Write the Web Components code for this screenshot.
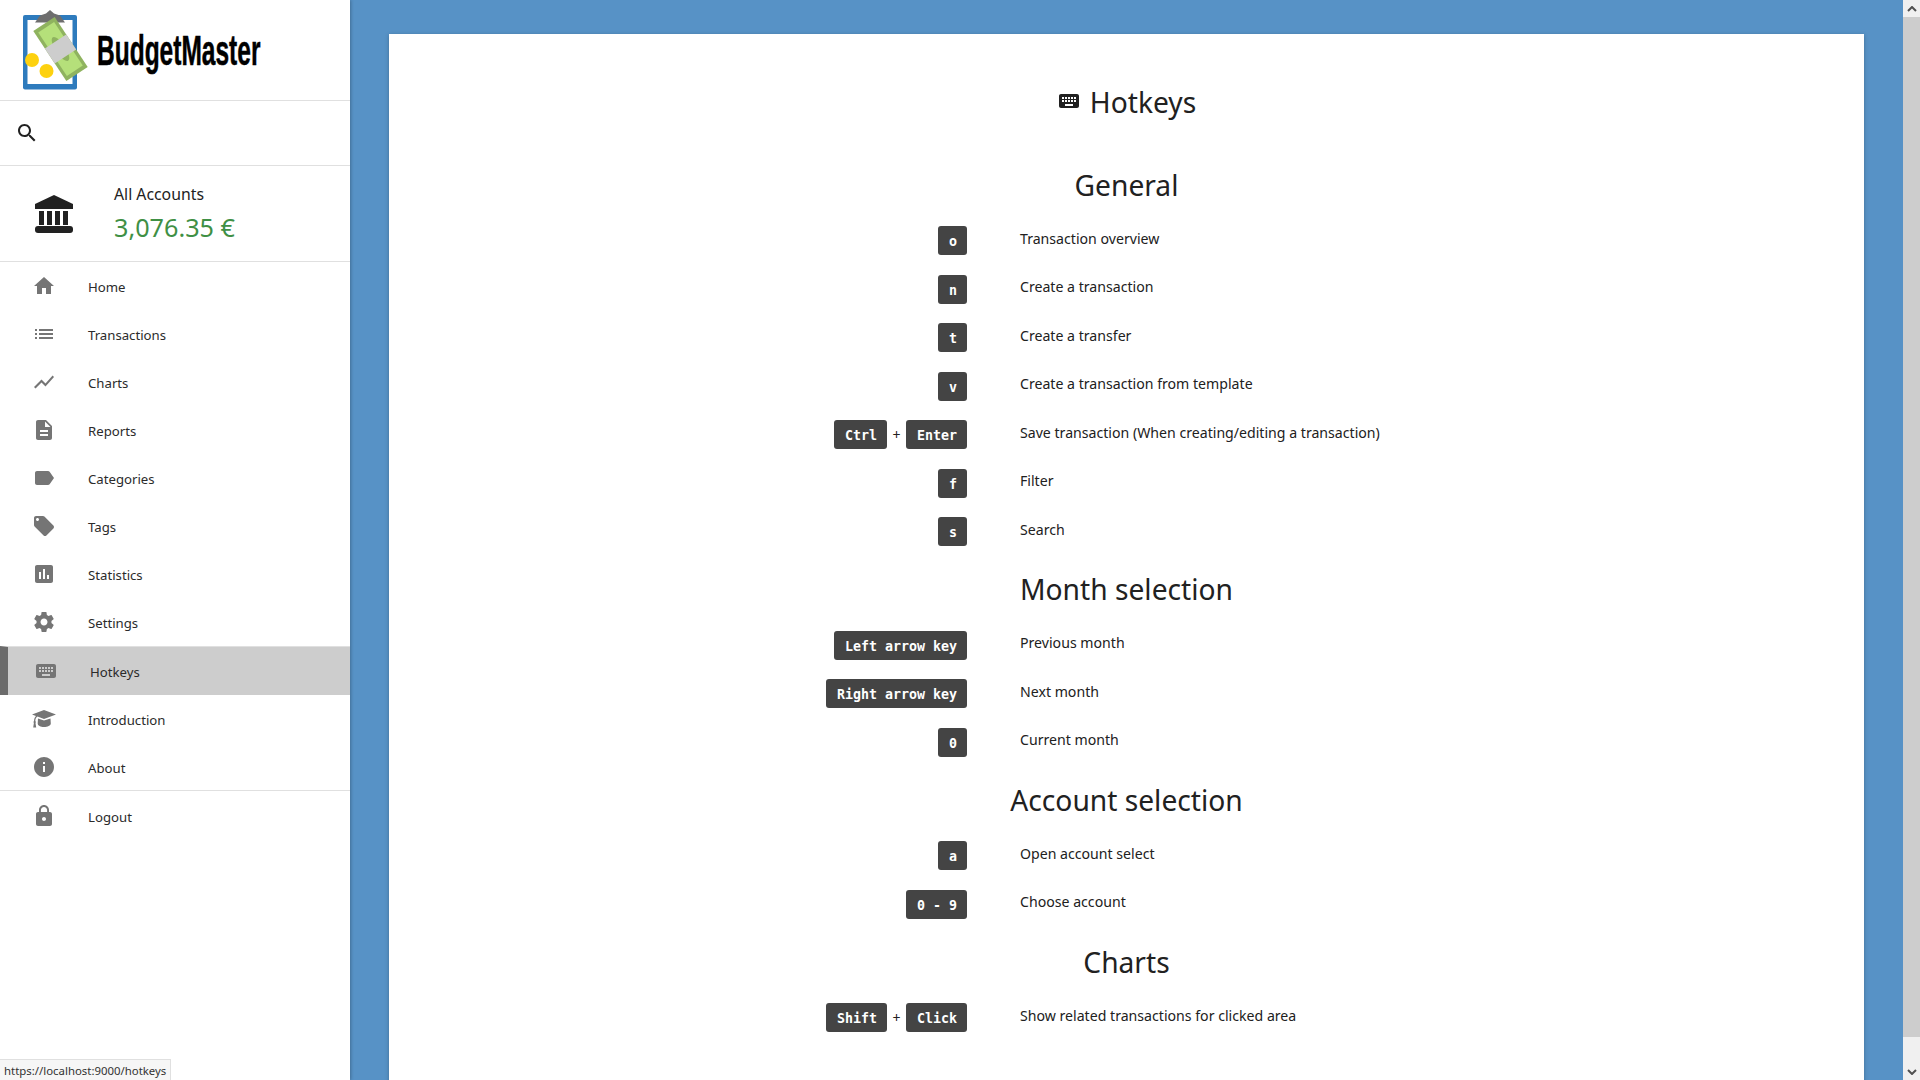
<!DOCTYPE html>
<html lang="en">
<head>
<meta charset="utf-8">
<title>BudgetMaster - Hotkeys</title>
<style>
  html, body { margin: 0; height: 100%; overflow: hidden; }
  body { font-family: "Noto Sans", "Open Sans", sans-serif; color: #212121; }
</style>
</head>
<body>
<bm-app>
  <bm-sidebar slot="sidebar">
    <bm-nav-item icon="home">Home</bm-nav-item>
    <bm-nav-item icon="list">Transactions</bm-nav-item>
    <bm-nav-item icon="chart">Charts</bm-nav-item>
    <bm-nav-item icon="report">Reports</bm-nav-item>
    <bm-nav-item icon="label">Categories</bm-nav-item>
    <bm-nav-item icon="tag">Tags</bm-nav-item>
    <bm-nav-item icon="stats">Statistics</bm-nav-item>
    <bm-nav-item icon="settings">Settings</bm-nav-item>
    <bm-nav-item icon="keyboard" active>Hotkeys</bm-nav-item>
    <bm-nav-item icon="school">Introduction</bm-nav-item>
    <bm-nav-item icon="info">About</bm-nav-item>
    <bm-nav-item icon="lock" divided>Logout</bm-nav-item>
  </bm-sidebar>

  <bm-card>
    <bm-title>Hotkeys</bm-title>

    <bm-section heading="General" first>
      <bm-row keys="o">Transaction overview</bm-row>
      <bm-row keys="n">Create a transaction</bm-row>
      <bm-row keys="t">Create a transfer</bm-row>
      <bm-row keys="v">Create a transaction from template</bm-row>
      <bm-row keys="Ctrl,Enter">Save transaction (When creating/editing a transaction)</bm-row>
      <bm-row keys="f">Filter</bm-row>
      <bm-row keys="s">Search</bm-row>
    </bm-section>

    <bm-section heading="Month selection">
      <bm-row keys="Left arrow key">Previous month</bm-row>
      <bm-row keys="Right arrow key">Next month</bm-row>
      <bm-row keys="0">Current month</bm-row>
    </bm-section>

    <bm-section heading="Account selection">
      <bm-row keys="a">Open account select</bm-row>
      <bm-row keys="0 - 9">Choose account</bm-row>
    </bm-section>

    <bm-section heading="Charts">
      <bm-row keys="Shift,Click">Show related transactions for clicked area</bm-row>
    </bm-section>
  </bm-card>
</bm-app>
<bm-status>https://localhost:9000/hotkeys</bm-status>

<script>
const ICONS = {
  home: 'M10 20v-6h4v6h5v-8h3L12 3 2 12h3v8z',
  list: 'M3 13h2v-2H3v2zm0 4h2v-2H3v2zm0-8h2V7H3v2zm4 4h14v-2H7v2zm0 4h14v-2H7v2zM7 7v2h14V7H7z',
  chart: 'M3.5 18.49l6-6.01 4 4L22 6.92l-1.41-1.41-7.09 7.97-4-4L2 16.99z',
  report: 'M14 2H6c-1.1 0-1.99.9-1.99 2L4 20c0 1.1.89 2 1.99 2H18c1.1 0 2-.9 2-2V8l-6-6zm2 16H8v-2h8v2zm0-4H8v-2h8v2zm-3-5V3.5L18.5 9H13z',
  label: 'M17.63 5.84C17.27 5.33 16.67 5 16 5L5 5.01C3.9 5.01 3 5.9 3 7v10c0 1.1.9 1.99 2 1.99L16 19c.67 0 1.27-.33 1.63-.84L22 12l-4.37-6.16z',
  tag: 'M21.41 11.58l-9-9C12.05 2.22 11.55 2 11 2H4c-1.1 0-2 .9-2 2v7c0 .55.22 1.05.59 1.42l9 9c.36.36.86.58 1.41.58.55 0 1.05-.22 1.41-.59l7-7c.37-.36.59-.86.59-1.41 0-.55-.23-1.06-.59-1.42zM5.5 7C4.67 7 4 6.33 4 5.5S4.67 4 5.5 4 7 4.67 7 5.5 6.33 7 5.5 7z',
  stats: 'M19 3H5c-1.1 0-2 .9-2 2v14c0 1.1.9 2 2 2h14c1.1 0 2-.9 2-2V5c0-1.1-.9-2-2-2zM9 17H7v-7h2v7zm4 0h-2V7h2v10zm4 0h-2v-4h2v4z',
  settings: 'M19.43 12.98c.04-.32.07-.64.07-.98s-.03-.66-.07-.98l2.11-1.65c.19-.15.24-.42.12-.64l-2-3.46c-.12-.22-.39-.3-.61-.22l-2.49 1c-.52-.4-1.08-.73-1.69-.98l-.38-2.65C14.46 2.18 14.25 2 14 2h-4c-.25 0-.46.18-.49.42l-.38 2.65c-.61.25-1.17.59-1.69.98l-2.49-1c-.23-.09-.49 0-.61.22l-2 3.46c-.13.22-.07.49.12.64l2.11 1.65c-.04.32-.07.65-.07.98s.03.66.07.98l-2.11 1.65c-.19.15-.24.42-.12.64l2 3.46c.12.22.39.3.61.22l2.49-1c.52.4 1.08.73 1.69.98l.38 2.65c.03.24.24.42.49.42h4c.25 0 .46-.18.49-.42l.38-2.65c.61-.25 1.17-.59 1.69-.98l2.49 1c.23.09.49 0 .61-.22l2-3.46c.12-.22.07-.49-.12-.64l-2.11-1.65zM12 15.5c-1.93 0-3.5-1.57-3.5-3.5s1.57-3.5 3.5-3.5 3.5 1.57 3.5 3.5-1.57 3.5-3.5 3.5z',
  keyboard: 'M20 5H4c-1.1 0-1.99.9-1.99 2L2 17c0 1.1.9 2 2 2h16c1.1 0 2-.9 2-2V7c0-1.1-.9-2-2-2zm-9 3h2v2h-2V8zm0 3h2v2h-2v-2zM8 8h2v2H8V8zm0 3h2v2H8v-2zm-1 2H5v-2h2v2zm0-3H5V8h2v2zm9 7H8v-2h8v2zm0-4h-2v-2h2v2zm0-3h-2V8h2v2zm3 3h-2v-2h2v2zm0-3h-2V8h2v2z',
  school: 'M12 3L24 7.500 12 12 5.500 9.600C4 10.500 3.400 12 3.300 14 4 14.500 4 15.500 3.500 16L4.200 20.500H1.200L1.900 16C1.400 15.500 1.400 14.500 2 14 2.100 11.800 2.800 10 4 9L0 7.500zM6 11.500L12 13.600 18.500 11.500 18.800 16.500C18.800 18.500 15.500 20 12 20 8.500 20 5.700 18.500 5.700 16.500z',
  info: 'M12 2C6.48 2 2 6.48 2 12s4.48 10 10 10 10-4.48 10-10S17.52 2 12 2zm1 15h-2v-6h2v6zm0-8h-2V7h2v2z',
  lock: 'M18 8h-1V6c0-2.76-2.24-5-5-5S7 3.24 7 6v2H6c-1.1 0-2 .9-2 2v10c0 1.1.9 2 2 2h12c1.1 0 2-.9 2-2V10c0-1.1-.9-2-2-2zm-6 9c-1.1 0-2-.9-2-2s.9-2 2-2 2 .9 2 2-.9 2-2 2zm3.1-9H8.9V6c0-1.71 1.39-3.1 3.1-3.1 1.71 0 3.1 1.39 3.1 3.1v2z',
  search: 'M15.5 14h-.79l-.28-.27C15.41 12.59 16 11.11 16 9.5 16 5.91 13.09 3 9.5 3S3 5.91 3 9.5 5.91 16 9.5 16c1.61 0 3.09-.59 4.23-1.57l.27.28v.79l5 4.99L20.49 19l-4.99-5zm-6 0C7.01 14 5 11.99 5 9.5S7.01 5 9.5 5 14 7.01 14 9.5 11.99 14 9.5 14z'
}

function icon(name, size) {
  return `<svg width="${size}" height="${size}" viewBox="0 0 24 24" fill="currentColor" style="display:block"><path d="${ICONS[name]}"/></svg>`
}

class App extends HTMLElement {
  constructor() {
    super()
    this.attachShadow({ mode: 'open' }).innerHTML = `
      <style>
        :host { display: flex; height: 100vh; background: #5792c6; }
        main { flex: 1; min-width: 0; padding: 34px 39px 0; overflow: hidden; }
        .scrollbar { flex: none; width: 17px; display: flex; flex-direction: column; background: #f0f0f0; color: #505050; }
        .btn { height: 17px; display: flex; align-items: center; justify-content: center; flex: none; }
        .thumb { height: 1020px; background: #cdcdcd; flex: none; }
        .track { flex: 1; }
      </style>
      <slot name="sidebar"></slot>
      <main><slot></slot></main>
      <div class="scrollbar">
        <div class="btn"><svg width="10" height="6" viewBox="0 0 10 6"><path d="M1 5l4-4 4 4" fill="none" stroke="currentColor" stroke-width="2"/></svg></div>
        <div class="thumb"></div>
        <div class="track"></div>
        <div class="btn"><svg width="10" height="6" viewBox="0 0 10 6"><path d="M1 1l4 4 4-4" fill="none" stroke="currentColor" stroke-width="2"/></svg></div>
      </div>`
  }
}

class Sidebar extends HTMLElement {
  constructor() {
    super()
    this.attachShadow({ mode: 'open' }).innerHTML = `
      <style>
        :host { display: flex; flex-direction: column; flex: none; width: 350px; height: 100%; background: #fff; box-shadow: 1px 0 3px rgba(0,0,0,.25); position: relative; }
        .logo { height: 100px; border-bottom: 1px solid #e0e0e0; display: flex; align-items: center; padding-left: 20px; gap: 5px; }
        .brand { font: bold 43px/1 "Liberation Sans", sans-serif; color: #000; -webkit-text-stroke: .5px #000; transform: scaleX(.57); transform-origin: left center; white-space: nowrap; width: 163px; }
        .search { height: 64px; border-bottom: 1px solid #e0e0e0; display: flex; align-items: center; padding-left: 15px; color: #212121; }
        .account { height: 95px; border-bottom: 1px solid #e0e0e0; display: flex; align-items: center; padding-left: 34px; gap: 40px; }
        .name { font-size: 15.8px; line-height: 24px; margin-bottom: 4px; }
        .amount { font-size: 25.200px; line-height: 34px; color: #3f9045; padding-bottom: 2px; }
      </style>
      <div class="logo">
        <svg width="72" height="90" viewBox="20 5 72 90" style="flex:none">
          <rect x="23" y="15" width="54" height="74.500" rx="2" fill="#2e7bbd"/>
          <rect x="27.500" y="20" width="45" height="64" fill="#fff"/>
          <path d="M35 22.500L40 15.500 46 13.500 50 10 54 13.500 60 15.500 65 22.500z" fill="#6e6e6e"/>
          <g transform="rotate(-33.400 60.500 49)">
            <rect x="47.700" y="19" width="25.600" height="60" fill="#8fb35f"/>
            <rect x="51" y="23" width="19" height="52" fill="#b5e07a"/>
            <ellipse cx="60.500" cy="49" rx="5" ry="14" fill="#8fb35f"/>
            <rect x="47.700" y="40" width="25.600" height="18" fill="#cdcdcd"/>
          </g>
          <circle cx="32" cy="60" r="7" fill="#fdd10f"/>
          <circle cx="46.500" cy="71" r="7" fill="#fdd10f"/>
        </svg>
        <span class="brand">BudgetMaster</span>
      </div>
      <div class="search">${icon('search', 24)}</div>
      <div class="account">
        <svg width="40" height="40" viewBox="0 0 40 40" fill="#212121" style="flex:none">
          <path d="M20 1L39 10V15H1V10z"/>
          <rect x="5" y="17" width="5" height="14"/><rect x="13" y="17" width="5" height="14"/>
          <rect x="21" y="17" width="5" height="14"/><rect x="29" y="17" width="5" height="14"/>
          <rect x="1" y="32" width="38" height="7" rx="3"/>
        </svg>
        <div>
          <div class="name">All Accounts</div>
          <div class="amount">3,076.35 €</div>
        </div>
      </div>
      <slot></slot>`
  }
}

class NavItem extends HTMLElement {
  constructor() {
    super()
    this.attachShadow({ mode: 'open' }).innerHTML = `
      <style>
        :host { display: flex; align-items: center; height: 48px; font-size: 13.2px; color: #2b2b2b; }
        :host([active]) { background: #cdcdcd; border-left: 8px solid #6b6b6b; border-top: 1px solid #e0e0e0; }
        :host([divided]) { border-top: 1px solid #e0e0e0; margin-top: -1px; height: 50px; }
        .ico { width: 24px; margin: 0 32px; color: #757575; flex: none; }
        :host([active]) .ico { margin-left: 26px; }
        .lbl { padding-top: 1px; }
      </style>
      <span class="ico">${icon(this.getAttribute('icon'), 24)}</span><span class="lbl"><slot></slot></span>`
  }
}

class Card extends HTMLElement {
  constructor() {
    super()
    this.attachShadow({ mode: 'open' }).innerHTML = `
      <style>
        :host { display: block; background: #fff; height: 1100px; padding-top: 45px; box-shadow: 0 1px 4px rgba(0,0,0,.25); box-sizing: border-box; }
      </style>
      <slot></slot>`
  }
}

class Title extends HTMLElement {
  constructor() {
    super()
    this.attachShadow({ mode: 'open' }).innerHTML = `
      <style>
        :host { display: flex; align-items: center; justify-content: center; gap: 9px; height: 44px; font-size: 28.200px; color: #212121; }
        .txt { padding-top: 2px; }
      </style>
      ${icon('keyboard', 24)}<span class="txt"><slot></slot></span>`
  }
}

class Section extends HTMLElement {
  constructor() {
    super()
    this.attachShadow({ mode: 'open' }).innerHTML = `
      <style>
        :host { display: block; }
        :host([first]) { margin-top: 28.500px; }
        h2 { margin: 0; height: 65px; padding-top: 1px; box-sizing: border-box; display: flex; align-items: center; justify-content: center; font-size: 28.200px; font-weight: 400; color: #212121; }
      </style>
      <h2>${this.getAttribute('heading')}</h2>
      <slot></slot>`
  }
}

class HotkeyRow extends HTMLElement {
  constructor() {
    super()
    const keys = this.getAttribute('keys').split(',')
      .map(k => `<bm-key>${k}</bm-key>`).join('<span class="plus">+</span>')
    this.attachShadow({ mode: 'open' }).innerHTML = `
      <style>
        :host { display: grid; grid-template-columns: 578px 1fr; column-gap: 53px; align-items: center; height: 48.500px; font-size: 14.130px; }
        .keys { display: flex; justify-content: flex-end; align-items: center; }
        .plus { width: 19px; text-align: center; font-size: 14px; }
        .desc { padding-bottom: 5px; }
      </style>
      <div class="keys">${keys}</div>
      <div class="desc"><slot></slot></div>`
  }
}

class Key extends HTMLElement {
  constructor() {
    super()
    this.attachShadow({ mode: 'open' }).innerHTML = `
      <style>
        :host { display: block; box-sizing: border-box; min-width: 29px; height: 29px; padding: 0 10px 0 11px; background: #444; color: #fff; border-radius: 3px; font: bold 13.300px/31px "DejaVu Sans Mono", "Liberation Mono", monospace; white-space: nowrap; }
      </style>
      <slot></slot>`
  }
}

class Status extends HTMLElement {
  constructor() {
    super()
    this.attachShadow({ mode: 'open' }).innerHTML = `
      <style>
        :host { position: fixed; left: 0; bottom: 0; height: 20px; line-height: 21px; padding: 0 4px; font-size: 11.400px; background: #f6f6f6; border: 1px solid #e0e0e0; border-width: 1px 1px 0 0; color: #333; white-space: nowrap; }
      </style>
      <slot></slot>`
  }
}

customElements.define('bm-key', Key)
customElements.define('bm-app', App)
customElements.define('bm-sidebar', Sidebar)
customElements.define('bm-nav-item', NavItem)
customElements.define('bm-card', Card)
customElements.define('bm-title', Title)
customElements.define('bm-section', Section)
customElements.define('bm-row', HotkeyRow)
customElements.define('bm-status', Status)
</script>
</body>
</html>
